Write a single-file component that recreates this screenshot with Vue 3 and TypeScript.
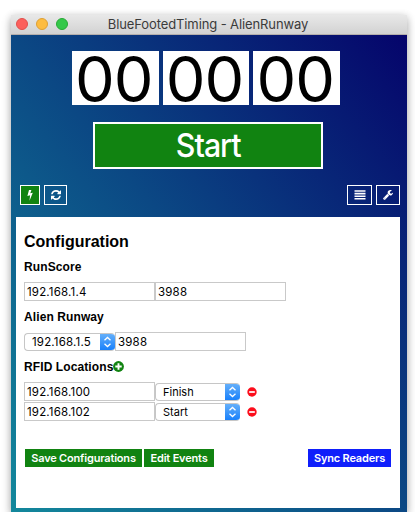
<script setup lang="ts">
import { ref } from 'vue'

interface Reader {
  address: string
  place: string
}

const digits = ref<string[]>(['00', '00', '00'])
const readers = ref<Reader[]>([
  { address: '192.168.100', place: 'Finish' },
  { address: '192.168.102', place: 'Start' },
])
</script>

<template>
  <main class="window">
    <header class="titlebar">
      <div class="lights"><i class="red"></i><i class="amber"></i><i class="green"></i></div>
      <span class="title">BlueFootedTiming - AlienRunway</span>
    </header>
    <div class="body">
      <div class="clock">
        <div v-for="(d, i) in digits" :key="i" class="digits">{{ d }}</div>
      </div>
      <button class="start"><span>Start</span></button>
      <nav class="tools">
        <button class="tool bolt">
          <svg width="6" height="11" viewBox="0 0 6 11"><path d="M2 0H4.4L3.3 3.3 5.8 2.8 2.5 10.8 3.1 5.3 .4 6Z" fill="#fff" /></svg>
        </button>
        <button class="tool refresh">
          <svg width="10" height="10" viewBox="0 0 1536 1536"><path fill="#fff" d="M1511 928q0 5-1 7-64 268-268 434.500T764 1536q-146 0-282.500-55T238 1324l-129 129q-19 19-45 19t-45-19-19-45V960q0-26 19-45t45-19h448q26 0 45 19t19 45-19 45l-137 137q71 66 161 102t187 36q134 0 250-65t186-179q11-17 53-117 8-23 30-23h192q13 0 22.500 9.500t9.500 22.500zM1536 128v448q0 26-19 45t-45 19h-448q-26 0-45-19t-19-45 19-45l138-138Q969 256 768 256q-134 0-250 65T332 500q-11 17-53 117-8 23-30 23H50q-13 0-22.500-9.500T18 608v-7q65-268 270-434.500T768 0q146 0 284 55.500T1297 212l130-129q19-19 45-19t45 19 19 45z" /></svg>
        </button>
        <span class="spacer"></span>
        <button class="tool list">
          <svg width="12" height="10" viewBox="0 0 12 10"><path d="M.5 1H11.500M.5 3.600H11.500M.5 6.200H11.500M.5 8.800H11.500" stroke="#fff" stroke-width="1.600" /></svg>
        </button>
        <button class="tool wrench">
          <svg width="10" height="10" viewBox="0 0 1664 1664"><path fill="#fff" d="M384 1344q0-26-19-45t-45-19-45 19-19 45 19 45 45 19 45-19 19-45zm644-420l-682 682q-37 37-90 37-52 0-91-37L59 1498q-38-36-38-90 0-53 38-91l681-681q39 98 114.500 173.500T1028 924zm634-435q0 39-23 106-47 134-164.500 217.500T1216 896q-185 0-316.500-131.500T768 448t131.500-316.500T1216 0q58 0 121.500 16.500T1445 63q16 11 16 28t-16 28l-293 169v224l193 107q5-3 79-48.500t135.500-81T1630 454q15 0 23.500 10t8.500 25z" /></svg>
        </button>
      </nav>
      <section class="panel">
        <h1><span>Configuration</span></h1>
        <h2><span>RunScore</span></h2>
        <div class="row">
          <div class="field">192.168.1.4</div><div class="field">3988</div>
        </div>
        <h2><span>Alien Runway</span></h2>
        <div class="row">
          <div class="select wide">
            <span>192.168.1.5</span>
            <b><svg width="9" height="12" viewBox="0 0 9 12"><path d="M1.500 4.300 4.500 1.500 7.500 4.300M1.500 7.700 4.500 10.500 7.500 7.700" /></svg></b>
          </div><div class="field">3988</div>
        </div>
        <h2>
          <span>RFID Locations</span>
          <svg width="11" height="11" viewBox="0 0 11 11"><circle cx="5.500" cy="5.500" r="5.400" fill="#118311" /><path d="M5.500 2.300V8.700M2.300 5.500H8.700" stroke="#fff" stroke-width="1.900" /></svg>
        </h2>
        <div class="readers">
          <div v-for="r in readers" :key="r.address" class="row">
            <div class="field">{{ r.address }}</div>
            <div class="select">
              <span>{{ r.place }}</span>
              <b><svg width="9" height="12" viewBox="0 0 9 12"><path d="M1.500 4.300 4.500 1.500 7.500 4.300M1.500 7.700 4.500 10.500 7.500 7.700" /></svg></b>
            </div>
            <svg class="minus" width="10" height="10" viewBox="0 0 10 10"><circle cx="5" cy="5" r="4.700" fill="#fc0d1b" /><path d="M2.200 5H7.800" stroke="#fff" stroke-width="1.700" /></svg>
          </div>
        </div>
        <footer class="actions">
          <button class="save">Save Configurations</button>
          <button class="edit">Edit Events</button>
          <span class="spacer"></span>
          <button class="sync">Sync Readers</button>
        </footer>
      </section>
    </div>
  </main>
</template>

<style>
body { background: #fff; overflow: hidden; }
</style>

<style scoped>
* { box-sizing: border-box; }
.window {
  width: 396px;
  height: 497px;
  margin: 15px 0 0 11px;
  font-family: Inter, "Liberation Sans", sans-serif;
  color: #000;
  box-shadow: 0 4px 9px rgba(0, 0, 0, .3), 0 0 7px rgba(0, 0, 0, .1);
}
.titlebar {
  position: relative;
  display: flex;
  align-items: center;
  justify-content: center;
  height: 20px;
  padding-right: 2px;
  background: linear-gradient(#e8e8e8, #d2d2d2);
  border-bottom: 1px solid #b5afac;
}
.lights { position: absolute; left: 5px; top: 3px; display: flex; gap: 8px; }
.lights i { width: 12px; height: 12px; border-radius: 50%; }
.red { background: #fc605c; border: 1px solid #e2504c; }
.amber { background: #fdbc40; border: 1px solid #dfa034; }
.green { background: #34c84a; border: 1px solid #27aa35; }
.title { font-size: 13px; line-height: 19px; color: #3b3b3b; white-space: nowrap; letter-spacing: -.11px; }
.body {
  height: 477px;
  padding: 16px 7px 4px 5px;
  background: linear-gradient(to top right, #13889c 0%, #0b4884 50%, #05046b 100%);
}
.clock { display: flex; gap: 4px; margin-left: 56px; }
.digits {
  width: 86.700px;
  height: 54px;
  padding-left: 3px;
  background: #fff;
  font-size: 63px;
  line-height: 57px;
  letter-spacing: -.9px;
  white-space: nowrap;
}
button { display: block; margin: 0; padding: 0; border: 0; border-radius: 0; font-family: inherit; color: #fff; white-space: nowrap; }
.start {
  width: 230px;
  height: 47px;
  margin: 17px 0 0 77px;
  border: 2px solid #fff;
  background: #118311;
  font-size: 33px;
  line-height: 43px;
  font-weight: 500;
}
.start span { display: inline-block; letter-spacing: -1.100px; transform: scaleX(.92); }
.tools { display: flex; gap: 4px; height: 20px; margin: 16px 0 0; padding-left: 4px; }
.spacer { flex: 1; }
.tool { display: flex; align-items: center; justify-content: center; height: 20px; border: 1px solid #fff; background: transparent; }
.bolt { width: 20px; background: #118311; }
.refresh { width: 23px; }
.list { width: 25px; }
.wrench { width: 24px; }
.panel { height: 291px; margin-top: 12px; padding: 14px 9px 0 8px; background: #fff; }
h1, h2 { margin: 0; font-family: "Liberation Sans", sans-serif; font-weight: 700; white-space: nowrap; }
h1 { height: 22px; font-size: 16px; line-height: 22px; }
h2 { display: flex; align-items: center; height: 16px; margin: 5px 0 8px; font-size: 12px; line-height: 16px; letter-spacing: .1px; }
h2 span { padding-top: 1px; }
.row { display: flex; height: 19px; }
.row + h2 { margin-top: 7px; }
.field {
  width: 131px;
  height: 19px;
  padding-left: 2px;
  border: 1px solid #c9c9c9;
  font-size: 11.500px;
  line-height: 18px;
  letter-spacing: .18px;
  background: #fff;
}
.select {
  display: flex;
  justify-content: space-between;
  width: 85px;
  height: 18px;
  margin-top: 1px;
  border: 1px solid #c6c6c6;
  border-right: 0;
  border-radius: 4px;
  padding-left: 7px;
  font-size: 11px;
  line-height: 17px;
  overflow: hidden;
}
.wide { width: 91px; font-size: 11.500px; letter-spacing: .18px; }
.select b { display: flex; align-items: center; justify-content: center; width: 15px; height: 18px; margin-top: -1px; background: linear-gradient(#69b2fa, #157efb); }
.select path { fill: none; stroke: #fff; stroke-width: 1.300; }
.readers { display: flex; flex-direction: column; gap: 1px; }
.minus { margin: 5px 0 0 7px; }
.actions { display: flex; gap: 2px; height: 18px; margin: 28px 0 0 1px; }
.actions button { height: 18px; font-size: 11px; line-height: 18px; font-weight: 600; letter-spacing: -.18px; background: #118311; }
.actions .save { width: 117px; }
.actions .edit { width: 70px; }
.actions .sync { width: 83px; background: #0f1ffb; }
</style>
